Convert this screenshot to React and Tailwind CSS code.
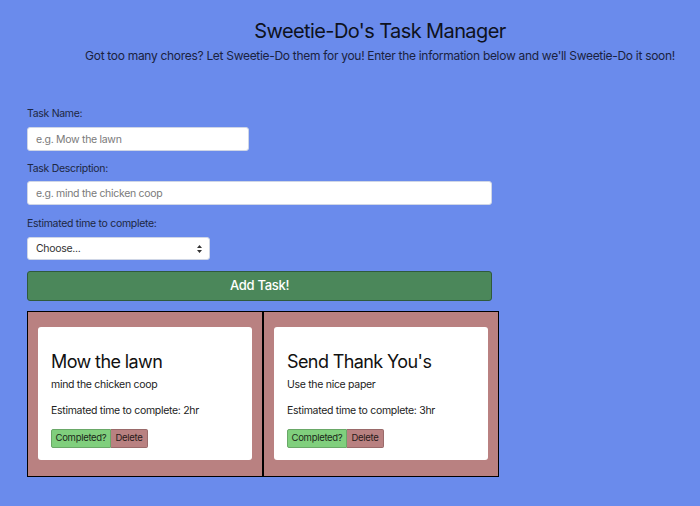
import React, { useState } from 'react';

// Tasks shown in the board below the form
const tasks = [
    { id: 1, name: "Mow the lawn", description: "mind the chicken coop", time: "2hr" },
    { id: 2, name: "Send Thank You's", description: "Use the nice paper", time: "3hr" },
];

function TaskCard({ task }) {
    return (
        <div className="w-[236px] border border-black px-[10px] pt-[15px] pb-[16px]">
            <div className="bg-white rounded-[3px] h-[133px] px-[13px] pt-[24px]">
                <h2 className="text-[18px] leading-[22px] tracking-[-0.6px] text-[#111]">{task.name}</h2>
                <p className="text-[10.5px] leading-[14px] mt-[5px] text-[#222]">{task.description}</p>
                <p className="text-[10.5px] leading-[14px] mt-[12px] text-[#222]">
                    Estimated time to complete: {task.time}
                </p>
                <div className="flex mt-[11px]">
                    <button className="h-[19px] w-[60px] text-[9.5px] text-[#1a2a1a] bg-[#80cf7d] border border-[#6aa868] rounded-l-[2px]">
                        Completed?
                    </button>
                    <button className="h-[19px] w-[37px] text-[9.5px] text-[#2a1a1a] bg-[#b98181] border border-[#9a6a6a] border-l-0 rounded-r-[2px]">
                        Delete
                    </button>
                </div>
            </div>
        </div>
    );
}

export default function App() {
    const [taskName, setTaskName] = useState("");
    const [taskDesc, setTaskDesc] = useState("");
    const [taskTime, setTaskTime] = useState("");

    return (
        <div
            className="min-h-[506px] bg-[#6a8bec] text-[#1d2742] tracking-[-0.3px] pb-[29px]"
            style={{ fontFamily: 'Inter, "Noto Sans", sans-serif' }}
        >
            {/* Header */}
            <div className="pl-[60px] pt-[18px] text-center">
                <h1 className="text-[20px] leading-[26px] tracking-[-0.6px] text-[#0e1220]">Sweetie-Do's Task Manager</h1>
                <p className="text-[12px] leading-[16px] mt-[4px] text-[#1a2240]">
                    Got too many chores? Let Sweetie-Do them for you! Enter the information below and we'll Sweetie-Do it soon!
                </p>
            </div>

            {/* Form */}
            <div className="px-[27px] mt-[43px] w-[492px] box-content">
                <label className="block text-[10.5px] leading-[14px]">Task Name:</label>
                <input
                    type="text"
                    value={taskName}
                    onChange={(e) => setTaskName(e.target.value)}
                    placeholder="e.g. Mow the lawn"
                    className="block mt-[6px] w-[222px] h-[24px] bg-white rounded-[3px] border border-[#cfd6e6] px-[8px] text-[10.5px] outline-none placeholder:text-[#7a7a7a]"
                />

                <label className="block mt-[11px] text-[10.5px] leading-[14px]">Task Description:</label>
                <input
                    type="text"
                    value={taskDesc}
                    onChange={(e) => setTaskDesc(e.target.value)}
                    placeholder="e.g. mind the chicken coop"
                    className="block mt-[5px] w-[465px] h-[24px] bg-white rounded-[3px] border border-[#cfd6e6] px-[8px] text-[10.5px] outline-none placeholder:text-[#7a7a7a]"
                />

                <label className="block mt-[12px] text-[10.5px] leading-[14px]">Estimated time to complete:</label>
                <div className="relative mt-[6px] w-[183px]">
                    <select
                        value={taskTime}
                        onChange={(e) => setTaskTime(e.target.value)}
                        className="block w-full h-[23px] appearance-none bg-white rounded-[3px] border border-[#cfd6e6] px-[8px] text-[10.5px] text-[#333] outline-none"
                    >
                        <option value="">Choose...</option>
                        <option value="1hr">1hr</option>
                        <option value="2hr">2hr</option>
                        <option value="3hr">3hr</option>
                    </select>
                    <svg className="absolute right-[8px] top-[8px] pointer-events-none" width="5" height="8" viewBox="0 0 5 8">
                        <path d="M2.5 0 L5 3 L0 3 Z M2.5 8 L5 5 L0 5 Z" fill="#333" />
                    </svg>
                </div>

                <button className="block mt-[11px] w-[465px] h-[30px] bg-[#4b875a] border border-[#2f5a3c] rounded-[3px] text-white text-[13px] font-medium">
                    Add Task!
                </button>
            </div>

            {/* Task board */}
            <div className="flex ml-[27px] mt-[10px] w-[472px] bg-[#b98181]">
                {tasks.map((task) => (
                    <TaskCard key={task.id} task={task} />
                ))}
            </div>
        </div>
    );
}
